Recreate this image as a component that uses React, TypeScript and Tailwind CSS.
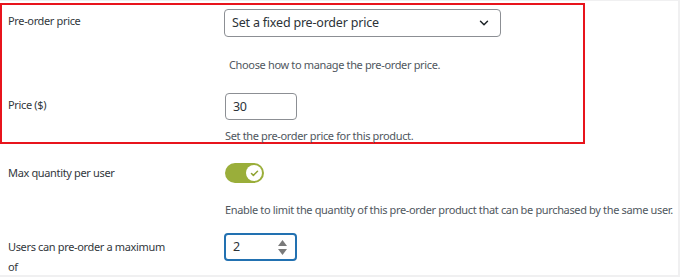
import { ChevronDown, Check } from "lucide-react";

const font = { fontFamily: '"Noto Sans", "Open Sans", sans-serif' };

export default function App() {
  return (
    <div className="w-[680px] h-[277px] bg-[#f0f0f1] pt-px pr-[2px] pb-[2px]" style={font}>
      <div className="h-full bg-white pt-[2px] text-[11px] tracking-[-0.35px] leading-5 text-[#32373c] overflow-hidden">
        {/* highlighted block */}
        <div className="w-[585px] h-[141px] border-2 border-[#e8141c]">
          <div className="flex pt-[4px]">
            <div className="w-[222px] shrink-0 pl-[6px] pt-[2px]">Pre-order price</div>
            <div className="w-[277px] h-[28px] rounded-[4px] border border-[#8c8f94] flex items-center justify-between pl-[7px] pr-[9px] text-[12.5px] tracking-[-0.2px] text-[#2c3338]">
              <span>Set a fixed pre-order price</span>
              <ChevronDown className="w-[14px] h-[14px] text-[#1d2327]" strokeWidth={2.5} />
            </div>
          </div>
          <p className="ml-[227px] mt-[18px] text-[#50575e]">Choose how to manage the pre-order price.</p>
          <div className="flex mt-[18px]">
            <div className="w-[223px] shrink-0 pl-[6px] pt-[2px]">Price ($)</div>
            <div className="w-[72px] h-[27px] rounded-[4px] border border-[#8c8f94] flex items-center pl-[7px] text-[12.5px] text-[#2c3338]">
              30
            </div>
          </div>
          <p className="ml-[223px] mt-[6px] text-[#50575e]">Set the pre-order price for this product.</p>
        </div>

        {/* max quantity toggle */}
        <div className="flex mt-[19px]">
          <div className="w-[225px] shrink-0 pl-[8px]">Max quantity per user</div>
          <div className="w-[39px] h-[20px] rounded-full bg-[#9aae3a] flex items-center justify-end pr-[2px]">
            <div className="w-[16px] h-[16px] rounded-full bg-white flex items-center justify-center">
              <Check className="w-[9px] h-[9px] text-[#8fa332]" strokeWidth={4} />
            </div>
          </div>
        </div>
        <p className="ml-[225px] mt-[17px] text-[#50575e] whitespace-nowrap">
          Enable to limit the quantity of this pre-order product that can be purchased by the same user.
        </p>

        {/* max per user */}
        <div className="flex mt-[13px]">
          <div className="w-[224px] shrink-0 pl-[8px] pt-[4px]">
            <div className="w-[160px]">Users can pre-order a maximum of</div>
          </div>
          <div className="w-[73px] h-[28px] rounded-[4px] border-2 border-[#2271b1] flex items-center justify-between pl-[7px] pr-[8px] text-[12.5px] text-[#2c3338]">
            <span>2</span>
            <div className="flex flex-col items-center gap-[3px]">
              <svg width="9" height="6" viewBox="0 0 9 6"><path d="M4.5 0L9 6H0z" fill="#7a7a7a" /></svg>
              <svg width="9" height="6" viewBox="0 0 9 6"><path d="M0 0h9L4.5 6z" fill="#7a7a7a" /></svg>
            </div>
          </div>
        </div>
      </div>
    </div>
  );
}
